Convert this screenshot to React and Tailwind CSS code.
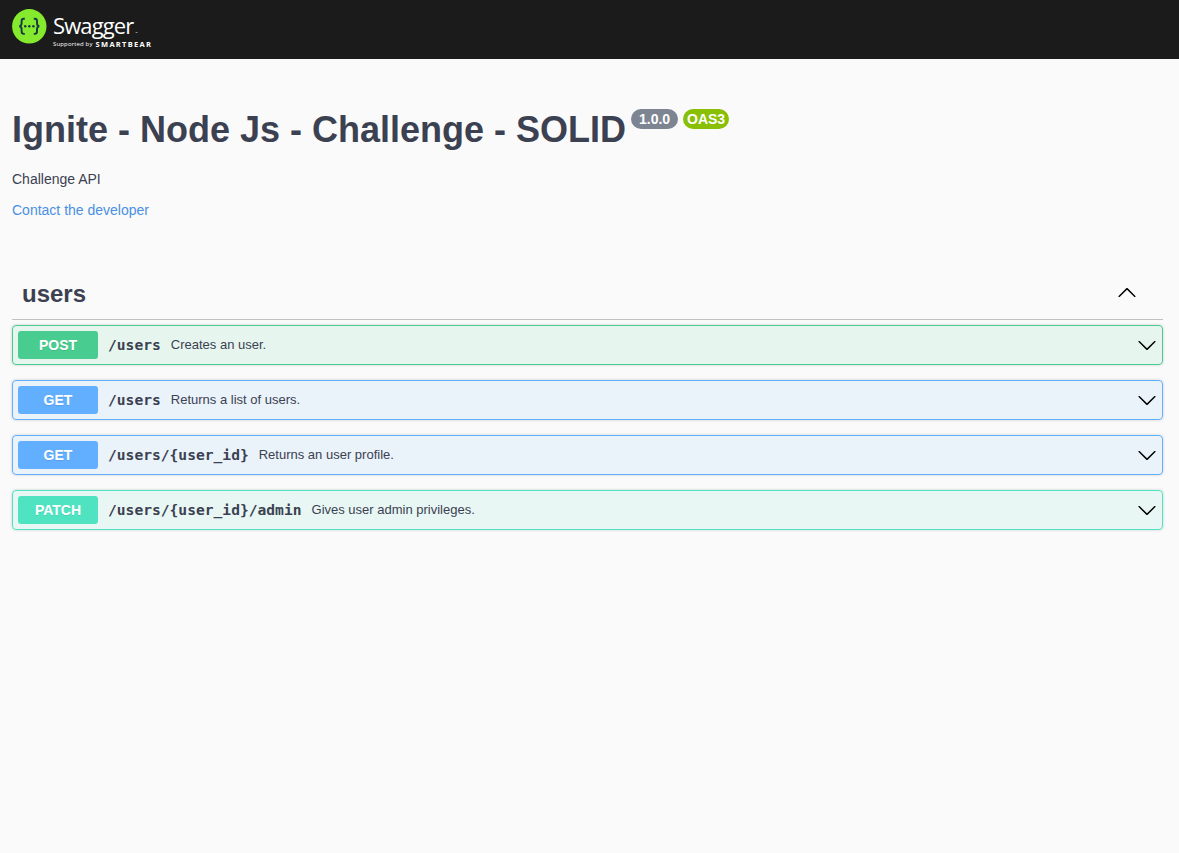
const ARROW_DOWN =
  'M17.418 6.109c.272-.268.709-.268.979 0s.271.701 0 .969l-7.908 7.83c-.27.268-.707.268-.979 0l-7.908-7.83c-.27-.268-.27-.701 0-.969.271-.268.709-.268.979 0L10 13.25l7.418-7.141z';
const ARROW_UP =
  'M17.418 14.908c.272.268.709.268.979 0s.271-.701 0-.969l-7.908-7.83c-.27-.268-.707-.268-.979 0l-7.908 7.83c-.27.268-.27.701 0 .969.271.268.709.268.979 0L10 7.767l7.418 7.141z';

const operations = [
  { method: 'POST', path: '/users', summary: 'Creates an user.', box: 'border-[#49cc90] bg-[#49cc90]/10', badge: 'bg-[#49cc90]' },
  { method: 'GET', path: '/users', summary: 'Returns a list of users.', box: 'border-[#61affe] bg-[#61affe]/10', badge: 'bg-[#61affe]' },
  { method: 'GET', path: '/users/{user_id}', summary: 'Returns an user profile.', box: 'border-[#61affe] bg-[#61affe]/10', badge: 'bg-[#61affe]' },
  { method: 'PATCH', path: '/users/{user_id}/admin', summary: 'Gives user admin privileges.', box: 'border-[#50e3c2] bg-[#50e3c2]/10', badge: 'bg-[#50e3c2]' },
];

function Arrow({ d }) {
  return (
    <svg className="size-5 shrink-0 fill-black" viewBox="0 0 20 20">
      <path d={d} />
    </svg>
  );
}

function Logo() {
  return (
    <div className="flex font-['Open_Sans',sans-serif] text-white">
      <svg className="mt-[9px] size-[35px]" viewBox="0 0 35 35">
        <circle cx="17.3" cy="17.3" r="17.2" fill="#85ea2d" />
        <g fill="none" stroke="#173647" strokeWidth="1.9">
          <path d="M12.8 9.7h-.9c-1.7 0-2.3.8-2.3 2.3v2.3c0 1.9-.6 2.8-2.3 3 1.7.2 2.3 1.2 2.3 3v2.3c0 1.6.6 2.3 2.3 2.3h.9" />
          <path d="M21.8 9.7h.9c1.7 0 2.3.8 2.3 2.3v2.3c0 1.9.6 2.8 2.3 3-1.7.2-2.3 1.2-2.3 3v2.3c0 1.6-.6 2.3-2.3 2.3h-.9" />
        </g>
        <g fill="#173647">
          <circle cx="13.2" cy="17.3" r="1.2" />
          <circle cx="17.3" cy="17.3" r="1.2" />
          <circle cx="21.4" cy="17.3" r="1.2" />
        </g>
      </svg>
      <div className="ml-1.5 flex flex-col pt-[11px]">
        <div className="flex h-7 items-end">
          <span className="text-[22px] leading-7 tracking-[-0.9px]">Swagger</span>
          <span className="mb-1 ml-[2px] text-[3px] leading-[4px]">™</span>
        </div>
        <div className="mt-px flex items-center whitespace-nowrap leading-2">
          <span className="text-[6px] tracking-[0.15px]">Supported by</span>
          <span className="ml-[3px] text-[7.5px] leading-2 font-bold tracking-[1.3px]">SMARTBEAR</span>
        </div>
      </div>
    </div>
  );
}

export default function App() {
  return (
    <div className="min-h-screen bg-[#fafafa] font-['Liberation_Sans',Arial,sans-serif] text-[#3b4151]">
      <header className="h-[59px] bg-[#1b1b1b] px-3">
        <Logo />
      </header>
      <main className="pr-4 pl-3">
        <section className="pt-[50px]">
          <div className="flex items-start">
            <h1 className="text-[36px] leading-[41px] font-bold whitespace-nowrap">Ignite - Node Js - Challenge - SOLID</h1>
            <span className="ml-[5px] flex h-5 w-[47px] items-center justify-center rounded-full bg-[#7d8492] text-sm font-bold text-white">1.0.0</span>
            <span className="ml-[5px] flex h-5 w-[46px] items-center justify-center rounded-full bg-[#89bf04] text-sm font-bold text-white">OAS3</span>
          </div>
          <p className="mt-[21px] text-sm leading-4">Challenge API</p>
          <a className="mt-[15px] block text-sm leading-4 text-[#4990e2]">Contact the developer</a>
        </section>
        <section className="mt-[50px]">
          <div className="flex h-[52px] items-center justify-between border-b border-[#3b4151]/30 pr-[26px] pl-2.5">
            <h2 className="text-2xl font-bold">users</h2>
            <div className="pb-1">
              <Arrow d={ARROW_UP} />
            </div>
          </div>
          <div className="mt-[5px] flex flex-col gap-[15px]">
            {operations.map((op) => (
              <div key={op.method + op.path} className={`flex h-10 items-center rounded border px-[5px] shadow-[0_0_3px_rgba(0,0,0,0.19)] ${op.box}`}>
                <span className={`flex h-7 w-20 items-center justify-center rounded-[3px] text-sm font-bold text-white [text-shadow:0_1px_0_rgba(0,0,0,0.1)] ${op.badge}`}>
                  {op.method}
                </span>
                <span className="ml-2.5 font-['DejaVu_Sans_Mono',monospace] text-[14.62px] font-bold">{op.path}</span>
                <span className="ml-2.5 grow text-[13px]">{op.summary}</span>
                <Arrow d={ARROW_DOWN} />
              </div>
            ))}
          </div>
        </section>
      </main>
    </div>
  );
}
